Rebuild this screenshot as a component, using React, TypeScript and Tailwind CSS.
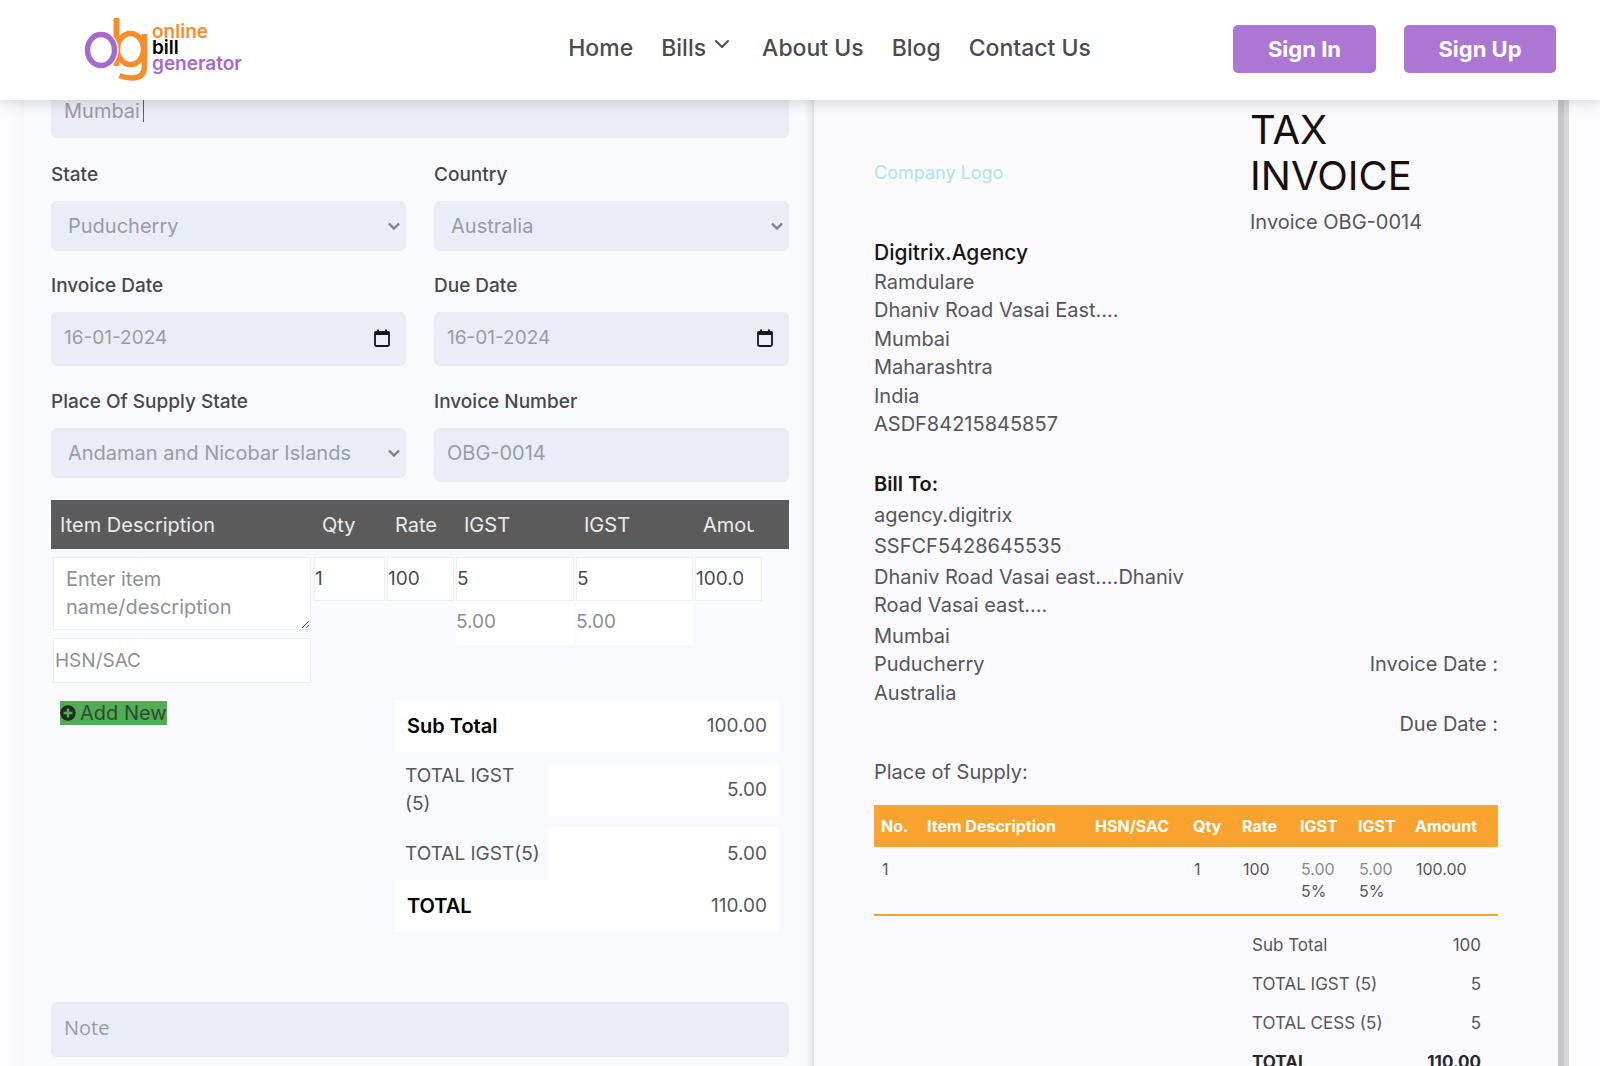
import React from "react";
import { FaPlusCircle } from "react-icons/fa";
import { ChevronDown } from "lucide-react";

const fieldBase =
  "block w-full rounded-md border border-[#ebebf1] bg-[#ebedf6] text-[#989ca4] outline-none";

function Logo() {
  return (
    <a href="#" aria-label="online bill generator" className="flex items-center gap-1">
      <svg viewBox="0 0 64 66" className="h-[66px] w-16" fill="none" aria-hidden="true">
        <path d="M32.500 1V49" stroke="#f98d2b" strokeWidth="6" />
        <ellipse cx="46.500" cy="32" rx="13" ry="15.500" stroke="#f98d2b" strokeWidth="5.500" />
        <path d="M60.500 17V49Q60.500 61 48 61Q41 61 35.500 58.500" stroke="#f98d2b" strokeWidth="5.500" />
        <ellipse cx="17" cy="33" rx="13.500" ry="15.500" stroke="#ffffff" strokeWidth="8" />
        <ellipse cx="17" cy="33" rx="13.500" ry="15.500" stroke="#a669cc" strokeWidth="5.500" />
      </svg>
      <span className="mb-1 flex flex-col font-['Inter',sans-serif] text-[19px] leading-4 font-semibold">
        <span className="text-[#f98d2b]">online</span>
        <span className="text-black">bill</span>
        <span className="text-[#a669cc]">generator</span>
      </span>
    </a>
  );
}

function Header() {
  return (
    <header className="relative z-10 flex h-[100px] shrink-0 items-center justify-between bg-white pr-11 pl-[84px] shadow-[0_2px_14px_rgba(0,0,0,0.16)]">
      <Logo />
      <nav className="mb-1 ml-auto flex items-center gap-7 text-[23px] font-medium text-[#4b4b4f]">
        <a href="#">Home</a>
        <a href="#" className="flex items-center">
          Bills
          <ChevronDown className="mb-2 ml-1 h-6 w-6" strokeWidth={2} />
        </a>
        <a href="#">About Us</a>
        <a href="#">Blog</a>
        <a href="#">Contact Us</a>
      </nav>
      <div className="mb-[2px] ml-[142px] flex gap-7 text-[22px] font-bold text-white">
        <button className="h-12 w-[143px] rounded-[5px] bg-[#ac77d2]">Sign In</button>
        <button className="h-12 w-[152px] rounded-[5px] bg-[#ac77d2]">Sign Up</button>
      </div>
    </header>
  );
}

function Label({ id, children }: { id: string; children: React.ReactNode }) {
  return (
    <label htmlFor={id} className="mb-3 block text-[19px] leading-7 font-medium text-[#47484c]">
      {children}
    </label>
  );
}

function SelectField({ id, label, value }: { id: string; label: string; value: string }) {
  return (
    <div>
      <Label id={id}>{label}</Label>
      <div className="relative">
        <select id={id} className={`${fieldBase} h-[50px] appearance-none pr-8 pl-4 text-[20px]`}>
          <option>{value}</option>
        </select>
        <svg
          viewBox="0 0 12 8"
          className="pointer-events-none absolute top-[21px] right-[6px] h-2 w-3"
          fill="none"
          stroke="#7f8085"
          strokeWidth="2.400"
          aria-hidden="true"
        >
          <path d="M1 1.500L6 6.500L11 1.500" />
        </svg>
      </div>
    </div>
  );
}

function DateField({ id, label }: { id: string; label: string }) {
  return (
    <div>
      <Label id={id}>{label}</Label>
      <div className="relative">
        <input id={id} defaultValue="16-01-2024" className={`${fieldBase} h-[54px] px-3 pb-1 text-[19px]`} />
        <svg viewBox="0 0 16 18" className="absolute top-[17px] right-4 h-[18px] w-4" aria-hidden="true">
          <rect x="1" y="3" width="14" height="14" rx="1.500" fill="none" stroke="#15161a" strokeWidth="1.800" />
          <path d="M0.500 2.500H15.500V6H0.500ZM3 0.500H5V3H3ZM11 0.500H13V3H11Z" fill="#15161a" />
        </svg>
      </div>
    </div>
  );
}

const cellInput = "block h-11 w-full border border-[#eeeef2] bg-white pb-px text-[19px] text-[#4b4c50] outline-none";
const faintInput = "block h-11 w-full bg-white pb-[3px] text-[19px] text-[#8b8d93] outline-none";

function ItemsTable() {
  return (
    <table className="mt-[18px] w-full table-fixed border-collapse text-left text-[20px]">
      <colgroup>
        <col />
        <col className="w-[73px]" />
        <col className="w-[69px]" />
        <col className="w-[120px]" />
        <col className="w-[119px]" />
        <col className="w-[95px]" />
      </colgroup>
      <thead className="bg-[#5b5b5b] text-[#ececec]">
        <tr className="h-[49px]">
          <th className="pl-[9px] font-normal">Item Description</th>
          <th className="pl-[9px] font-normal">Qty</th>
          <th className="pl-[9px] font-normal">Rate</th>
          <th className="pl-[9px] font-normal">IGST</th>
          <th className="pl-[9px] font-normal">IGST</th>
          <th className="pl-[9px] font-normal">
            <span className="block w-[51px] overflow-hidden">Amount</span>
          </th>
        </tr>
      </thead>
      <tbody className="align-top">
        <tr>
          <td className="px-[2px] pt-2">
            <textarea
              aria-label="Item description"
              placeholder={"Enter item\nname/description"}
              className="block h-[73px] w-full resize border border-[#eeeef2] bg-white px-3 py-[7px] text-[20px] leading-7 outline-none placeholder:text-[#8f9094]"
            />
            <input
              aria-label="HSN/SAC"
              placeholder="HSN/SAC"
              className="mt-2 block h-[45px] w-full border border-[#eeeef2] bg-white px-px text-[19px] outline-none placeholder:text-[#8f9094]"
            />
          </td>
          <td className="px-px pt-2">
            <input aria-label="Qty" defaultValue="1" className={cellInput} />
          </td>
          <td className="px-px pt-2">
            <input aria-label="Rate" defaultValue="100" className={cellInput} />
          </td>
          <td className="px-px pt-2">
            <input aria-label="IGST rate" defaultValue="5" className={cellInput} />
            <input aria-label="IGST amount" defaultValue="5.00" className={faintInput} />
          </td>
          <td className="px-px pt-2">
            <input aria-label="Second IGST rate" defaultValue="5" className={cellInput} />
            <input aria-label="Second IGST amount" defaultValue="5.00" className={faintInput} />
          </td>
          <td className="px-px pt-2">
            <div className="w-[67px] border border-[#eeeef2] bg-white pr-[18px]">
              <input
                aria-label="Amount"
                defaultValue="100.00"
                className="block h-[42px] w-full bg-white pb-px text-[19px] text-[#4b4c50] outline-none"
              />
            </div>
          </td>
        </tr>
      </tbody>
    </table>
  );
}

function FormTotals() {
  return (
    <table className="mr-[10px] w-[384px] table-fixed border-collapse text-left text-[19px] leading-7 text-[#55575d]">
      <colgroup>
        <col className="w-[153px]" />
        <col />
      </colgroup>
      <tbody>
        <tr className="h-[52px] bg-white">
          <th className="pl-3 text-[20px] font-semibold text-black">Sub Total</th>
          <td className="pr-3 text-right">100.00</td>
        </tr>
        <tr className="h-[75px]">
          <th className="pr-6 pl-[10px] font-normal">TOTAL IGST (5)</th>
          <td>
            <div className="bg-white py-3 pr-3 text-right">5.00</div>
          </td>
        </tr>
        <tr className="h-[53px]">
          <th className="pl-[10px] font-normal whitespace-nowrap">TOTAL IGST(5)</th>
          <td className="bg-white pr-3 text-right">5.00</td>
        </tr>
        <tr className="h-[52px] bg-white">
          <th className="pl-3 text-[20px] font-semibold text-black">TOTAL</th>
          <td className="pr-3 text-right">110.00</td>
        </tr>
      </tbody>
    </table>
  );
}

function InvoiceForm() {
  return (
    <form className="min-w-0 bg-[#f9fafd] pr-[25px] pl-[27px] shadow-[0_0_14px_rgba(0,0,0,0.06)]">
      <div className="relative">
        <input aria-label="City" defaultValue="Mumbai" className={`${fieldBase} h-[54px] px-3 text-[20px]`} />
        <span className="absolute top-4 left-[92px] h-[22px] w-px bg-[#5c5e66]" />
      </div>
      <div className="mt-[23px] grid grid-cols-2 gap-x-7">
        <SelectField id="state" label="State" value="Puducherry" />
        <SelectField id="country" label="Country" value="Australia" />
      </div>
      <div className="mt-[21px] grid grid-cols-2 gap-x-7">
        <DateField id="invoice-date" label="Invoice Date" />
        <DateField id="due-date" label="Due Date" />
      </div>
      <div className="mt-[22px] grid grid-cols-2 gap-x-7">
        <SelectField id="place" label="Place Of Supply State" value="Andaman and Nicobar Islands" />
        <div>
          <Label id="number">Invoice Number</Label>
          <input id="number" defaultValue="OBG-0014" className={`${fieldBase} h-[54px] px-3 pb-1 text-[20px]`} />
        </div>
      </div>
      <ItemsTable />
      <div className="mt-[17px] flex items-start justify-between">
        <button
          type="button"
          className="mt-px ml-[9px] flex h-6 items-center gap-1 bg-[#50ad55] text-[20px] leading-6 text-[#2f4a33]"
        >
          <FaPlusCircle className="h-4 w-4 text-[#1d2b20]" />
          Add New
        </button>
        <FormTotals />
      </div>
      <input
        aria-label="Note"
        placeholder="Note"
        className={`${fieldBase} mt-[70px] h-[55px] px-3 pb-1 font-['Open_Sans',sans-serif] text-[20px] placeholder:text-[#989ca4]`}
      />
      <div className="h-16" />
    </form>
  );
}

function Preview() {
  return (
    <section className="min-w-0 bg-[#faf9fc] px-[60px] text-[20px] leading-7 text-[#55565a] shadow-[6px_0_0_#c8c6c8,11px_0_0_#d6d5d7,-2px_0_8px_rgba(0,0,0,0.14)]">
      <div className="flex pt-[23px]">
        <p className="w-[376px] pt-[52px] text-[18px] text-[#a9e7ec]">Company Logo</p>
        <div className="flex-1">
          <h1 className="w-[190px] text-[40px] leading-[46px] text-[#1a0f10]">TAX INVOICE</h1>
          <p className="mt-[9px]">Invoice OBG-0014</p>
        </div>
      </div>
      <div className="mt-[3px]">
        <p className="text-[21px] font-medium text-[#1c1416]">Digitrix.Agency</p>
        <p className="mt-px">Ramdulare</p>
        <p>Dhaniv Road Vasai East....</p>
        <p className="mt-px">Mumbai</p>
        <p>Maharashtra</p>
        <p className="mt-px">India</p>
        <p>ASDF84215845857</p>
      </div>
      <div className="mt-8 flex items-end justify-between">
        <div>
          <p className="font-semibold text-[#1c1416]">Bill To:</p>
          <p className="mt-[3px]">agency.digitrix</p>
          <p className="mt-[3px]">SSFCF5428645535</p>
          <p className="mt-[3px] w-[320px]">Dhaniv Road Vasai east....Dhaniv Road Vasai east....</p>
          <p className="mt-[3px]">Mumbai</p>
          <p>Puducherry</p>
          <p className="mt-px">Australia</p>
        </div>
        <p className="mb-[29px]">Invoice Date :</p>
      </div>
      <p className="mt-[3px] text-right">Due Date :</p>
      <p className="mt-5">Place of Supply:</p>
      <table className="mt-[19px] w-full table-fixed border-collapse border-b-2 border-[#f5a132] text-left text-[16px] leading-[22px]">
        <colgroup>
          <col className="w-[46px]" />
          <col className="w-[168px]" />
          <col className="w-[98px]" />
          <col className="w-[49px]" />
          <col className="w-[58px]" />
          <col className="w-[58px]" />
          <col className="w-[57px]" />
          <col />
        </colgroup>
        <thead className="bg-[#faa32e] text-white">
          <tr className="h-[42px]">
            {["No.", "Item Description", "HSN/SAC", "Qty", "Rate", "IGST", "IGST", "Amount"].map((h, i) => (
              <th key={i} className="pl-[7px] font-bold whitespace-nowrap">
                {h}
              </th>
            ))}
          </tr>
        </thead>
        <tbody className="align-top">
          <tr className="h-[68px]">
            <td className="pt-[11px] pl-2">1</td>
            <td />
            <td />
            <td className="pt-[11px] pl-2">1</td>
            <td className="pt-[11px] pl-2">100</td>
            <td className="pt-[11px] pl-2">
              <span className="block text-[#8a8b8f]">5.00</span>
              <span className="block">5%</span>
            </td>
            <td className="pt-[11px] pl-2">
              <span className="block text-[#8a8b8f]">5.00</span>
              <span className="block">5%</span>
            </td>
            <td className="pt-[11px] pl-2">100.00</td>
          </tr>
        </tbody>
      </table>
      <table className="mt-[9px] ml-auto w-[246px] border-collapse text-left text-[17px] leading-6">
        <tbody>
          {[
            ["Sub Total", "100"],
            ["TOTAL IGST (5)", "5"],
            ["TOTAL CESS (5)", "5"],
          ].map(([k, v]) => (
            <tr key={k} className="h-[39px]">
              <th className="font-normal">{k}</th>
              <td className="pr-[17px] text-right">{v}</td>
            </tr>
          ))}
          <tr className="h-[39px] text-[#26272b]">
            <th className="font-bold">TOTAL</th>
            <td className="pr-[17px] text-right font-bold">110.00</td>
          </tr>
        </tbody>
      </table>
    </section>
  );
}

export default function App() {
  return (
    <div className="flex h-screen flex-col overflow-hidden bg-[#fcfbfd] font-['Inter','Open_Sans',sans-serif]">
      <Header />
      <main className="-mt-4 grid grid-cols-[790fr_744fr] pr-[42px] pl-6">
        <InvoiceForm />
        <Preview />
      </main>
    </div>
  );
}
